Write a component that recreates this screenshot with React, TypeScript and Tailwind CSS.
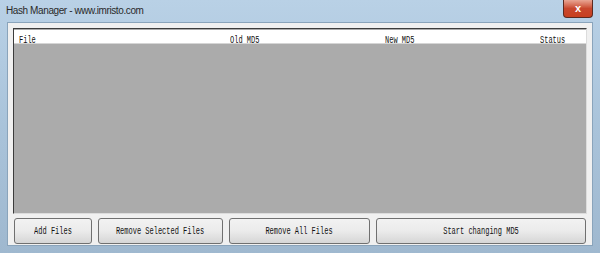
import React from "react";

const mono = "font-['Liberation_Mono',monospace] text-[10px] text-[#111]";

const Label = ({ text }: { text: string }) => (
  <span className={`inline-block scale-x-[0.7] origin-left whitespace-nowrap ${mono}`}>
    {text}
  </span>
);

const Button = ({ text, className }: { text: string; className: string }) => (
  <div
    className={`h-[26px] rounded-[3px] border border-[#707070] bg-gradient-to-b from-[#f2f2f2] via-[#ebebeb] to-[#d6d6d6] flex items-center justify-center ${className}`}
  >
    <span className={`inline-block scale-x-[0.7] whitespace-nowrap ${mono}`}>{text}</span>
  </div>
);

const App = () => {
  return (
    <div className="w-[600px] h-[253px] bg-gradient-to-b from-[#b9d1e6] via-[#a9c3da] to-[#9fb8cf] flex flex-col overflow-hidden">
      <div className="h-[22px] flex items-center justify-between pl-[6px] pr-[7px]">
        <span className="font-['Liberation_Sans',sans-serif] text-[10px] tracking-[-0.4px] text-[#2a2a2a] mt-[-1px]">
          Hash Manager - www.imristo.com
        </span>
        <div className="w-[30px] h-[18px] self-start rounded-b-[4px] border border-t-0 border-[#5c2a20] bg-gradient-to-b from-[#e8a593] via-[#c8472d] to-[#c8401f] flex items-center justify-center">
          <span className="text-white text-[11px] font-bold font-['Liberation_Sans',sans-serif] leading-none">x</span>
        </div>
      </div>
      <div className="mx-[7px] mb-[7px] flex-1 border border-[#8aa4bb] bg-[#f0f0f0] px-[5px] pt-[5px] flex flex-col">
        <div className="h-[186px] border border-[#3c3c3c] border-r-[#dcdcdc] border-b-[#dcdcdc] bg-[#ababab] flex flex-col">
          <div className="h-[14px] mt-[1px] bg-white border-b border-[#d5d5d5] flex items-center">
            <div className="w-[216px] pl-[5px]"><Label text="File" /></div>
            <div className="w-[155px]"><Label text="Old MD5" /></div>
            <div className="w-[155px]"><Label text="New MD5" /></div>
            <div className="flex-1"><Label text="Status" /></div>
          </div>
        </div>
        <div className="flex gap-[6px] mt-[4px] pl-[1px] pr-[1px]">
          <Button text="Add Files" className="w-[78px]" />
          <Button text="Remove Selected Files" className="w-[125px]" />
          <Button text="Remove All Files" className="w-[141px]" />
          <Button text="Start changing MD5" className="flex-1" />
        </div>
      </div>
    </div>
  );
};

export default App;
